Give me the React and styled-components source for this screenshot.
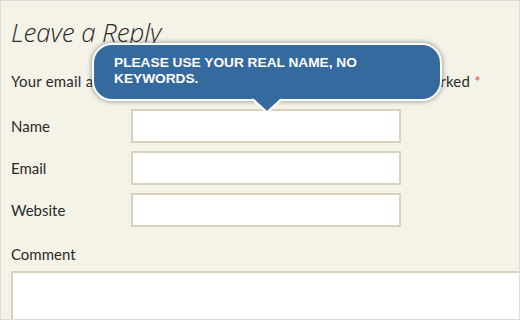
import React from "react";
import styled, { createGlobalStyle } from "styled-components";

const Global = createGlobalStyle`
  html, body { margin: 0; padding: 0; background: #f5f3e7; }
  body { width: 520px; height: 320px; overflow: hidden; }
`;

const Page = styled.div`
  position: relative;
  box-sizing: border-box;
  width: 520px;
  height: 320px;
  overflow: hidden;
  border: 1px solid #dedcd6;
  background: #f5f3e7;
  padding: 0 0 0 10px;
  font-family: "Lato", "Open Sans", sans-serif;
  color: #2a2a2a;
`;

const Title = styled.h3`
  margin: 14px 0 0 0;
  font-family: "Open Sans", sans-serif;
  font-style: italic;
  font-weight: 300;
  font-size: 26px;
  line-height: 34px;
  letter-spacing: -0.1px;
  color: #2a2a2a;
`;

const Notes = styled.p`
  margin: 22px 0 0 0;
  font-size: 15px;
  line-height: 20px;
  letter-spacing: 0.22px;
  white-space: nowrap;
`;

const Req = styled.span`
  color: #e0464f;
`;

const Fields = styled.div`
  margin-top: 18px;
  display: grid;
  grid-template-columns: 120px 270px;
  row-gap: 8px;
  align-items: center;
`;

const Label = styled.label`
  font-size: 15px;
  line-height: 20px;
`;

const Input = styled.div`
  box-sizing: border-box;
  height: 34px;
  background: #fff;
  border: 2px solid #d8d2bc;
`;

const CommentLabel = styled.div`
  margin-top: 17px;
  font-size: 15px;
  line-height: 20px;
`;

const TextArea = styled.div`
  box-sizing: border-box;
  margin-top: 7px;
  width: 540px;
  height: 80px;
  background: #fff;
  border: 2px solid #d8d2bc;
`;

const Bubble = styled.div`
  position: absolute;
  left: 91px;
  top: 42px;
  box-sizing: border-box;
  width: 350px;
  height: 58px;
  padding: 10px 20px 0 20px;
  background: #356a9e;
  border: 2px solid #fff;
  border-radius: 20px;
  box-shadow: 0 0 4px 1px rgba(60, 70, 90, 0.45);
  font-family: "Liberation Sans", Arial, sans-serif;
  font-weight: bold;
  font-size: 13.7px;
  line-height: 16px;
  color: #fff;
`;

const Arrow = styled.svg`
  position: absolute;
  left: 157px;
  top: 52px;
  overflow: visible;
`;

export default function App() {
  return (
    <>
      <Global />
      <Page>
        <Title>Leave a Reply</Title>
        <Notes>
          Your email address will not be published. Required fields are marked <Req>*</Req>
        </Notes>
        <Fields>
          <Label>Name</Label>
          <Input />
          <Label>Email</Label>
          <Input />
          <Label>Website</Label>
          <Input />
        </Fields>
        <CommentLabel>Comment</CommentLabel>
        <TextArea />
        <Bubble>
          PLEASE USE YOUR REAL NAME, NO
          <br />
          KEYWORDS.
          <Arrow width="32" height="16" viewBox="0 0 32 16">
            <polygon points="1,0 16,14 31,0" fill="#356a9e" />
            <polyline points="1,2 16,15.5 31,2" fill="none" stroke="#fff" strokeWidth="2" />
          </Arrow>
        </Bubble>
      </Page>
    </>
  );
}
